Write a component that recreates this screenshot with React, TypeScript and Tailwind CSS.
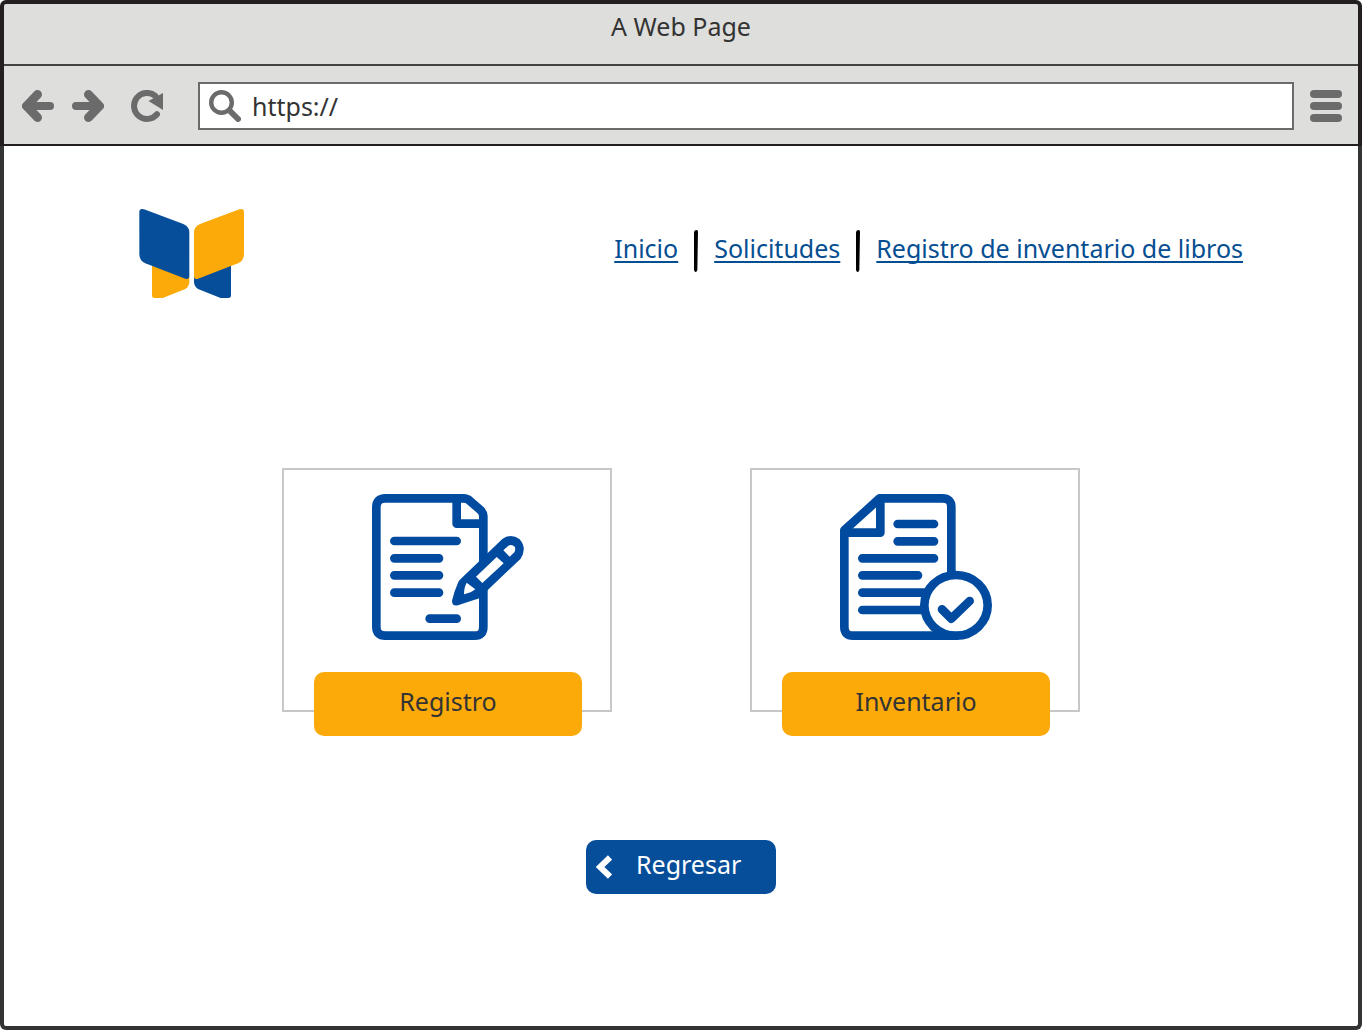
import React from "react";

function BackIcon() {
  return (
    <svg viewBox="0 0 32 32" className="size-8" fill="none" stroke="#6b6b6b" strokeLinecap="round" strokeLinejoin="round" aria-hidden="true">
      <path d="M15.500 4.500 4.500 16 15.500 27.500" strokeWidth="9" />
      <path d="M6 16h22" strokeWidth="8" />
    </svg>
  );
}

function ForwardIcon() {
  return (
    <svg viewBox="0 0 32 32" className="size-8" fill="none" stroke="#6b6b6b" strokeLinecap="round" strokeLinejoin="round" aria-hidden="true">
      <path d="M16.500 4.500 27.500 16 16.500 27.500" strokeWidth="9" />
      <path d="M26 16H4" strokeWidth="8" />
    </svg>
  );
}

function ReloadIcon() {
  return (
    <svg viewBox="0 0 32 32" className="size-8" aria-hidden="true">
      <path d="M26 24.300A13 13 0 1 1 24.200 5.800" fill="none" stroke="#6b6b6b" strokeWidth="6" strokeLinecap="round" />
      <path d="M32 3V20L17.500 11Z" fill="#6b6b6b" />
    </svg>
  );
}

function SearchIcon() {
  return (
    <svg viewBox="0 0 32 32" className="size-8 shrink-0" fill="none" stroke="#6b6b6b" strokeLinecap="round" aria-hidden="true">
      <circle cx="12.500" cy="12.500" r="10.300" strokeWidth="4.400" />
      <path d="M20.500 20.500 29 29" strokeWidth="6" />
    </svg>
  );
}

function MenuIcon() {
  return (
    <svg viewBox="0 0 32 32" className="size-8" fill="#6b6b6b" aria-hidden="true">
      <rect width="32" height="8" rx="4" />
      <rect y="12" width="32" height="8" rx="4" />
      <rect y="24" width="32" height="8" rx="4" />
    </svg>
  );
}

function Logo() {
  return (
    <svg viewBox="27 27 315 267" className="h-[89px] w-[105px]" role="img" aria-label="Logo">
      <path d="M66 190 178 230V245Q178 258 166 267L98 294H74Q66 294 66 286Z" fill="#fcaa0a" />
      <path d="M303 190 192 230V245Q192 258 204 267L272 294H295Q303 294 303 286Z" fill="#064e9a" />
      <path d="M28 36Q28 24 42 28L160 72Q178 80 178 97V229Q178 239 166 236L46 190Q28 182 28 162Z" fill="#064e9a" />
      <path d="M342 36Q342 24 328 28L210 72Q192 80 192 97V229Q192 239 204 236L324 190Q342 182 342 162Z" fill="#fcaa0a" />
    </svg>
  );
}

function Divider() {
  return (
    <svg viewBox="0 0 12 126" className="h-[42px] w-1" aria-hidden="true">
      <path d="M0 7Q1 0 8 0 12 0 12 5L10 120Q9 126 4 126 0 124 0 118Z" />
    </svg>
  );
}

function RegisterIcon() {
  return (
    <svg viewBox="36 42 456 438" className="h-[146px] w-[152px]" fill="none" stroke="#004ba0" strokeWidth="26" strokeLinecap="round" strokeLinejoin="round" aria-hidden="true">
      <path d="M370 242V108Q370 99 362 91L329 62Q322 55 310 55H76Q49 55 49 82V440Q49 467 76 467H344Q370 467 370 440V322" />
      <path d="M290 60V131H366" />
      <path d="M103 183H290M103 235H237M103 286H237M103 338H237M209 416H290" />
      <g stroke="none">
        <path d="M427 177Q453 159 479 178 502 205 482 236L362 350Q356 357 344 359L294 376Q276 380 276 362 281 338 294 308 296 302 302 297Z" fill="#004ba0" />
        <path d="M348 290 410 231 431 250 367 309ZM430 211 445 197Q456 192 465 201 467 212 463 217L449 230ZM320 308 346 328Q334 338 312 343 312 322 320 308Z" fill="#fff" />
      </g>
    </svg>
  );
}

function InventoryIcon() {
  return (
    <svg viewBox="45 42 456 438" className="h-[146px] w-[152px]" fill="none" stroke="#004ba0" strokeWidth="26" strokeLinecap="round" strokeLinejoin="round" aria-hidden="true">
      <path d="M379 285V81Q379 55 352 55H164L58 151V440Q58 467 84 467H394" />
      <path d="M166 58V158H60" />
      <path d="M218 132H327M218 184H327M112 235H327M112 286H279M112 338H300M112 390H295" />
      <ellipse cx="393" cy="376" rx="95" ry="91" fill="#fff" />
      <path d="M351 388 379 416 434 363" />
    </svg>
  );
}

const links = ["Inicio", "Solicitudes", "Registro de inventario de libros"];

const cards = [
  { label: "Registro", Icon: RegisterIcon },
  { label: "Inventario", Icon: InventoryIcon },
];

export default function App() {
  return (
    <div className="flex min-h-screen flex-col bg-white font-['Noto_Sans',sans-serif] text-[25px] leading-8 text-[#333]">
      <header className="rounded-t-md border-x-4 border-t-4 border-b-2 border-[#231f20] bg-[#dededc]">
        <h1 className="flex h-[62px] items-center justify-center border-b-2 border-[#444242] pb-4">A Web Page</h1>
        <div className="flex items-center pt-4 pr-4 pb-3.5 pl-[18px]">
          <button type="button" aria-label="Atrás">
            <BackIcon />
          </button>
          <button type="button" aria-label="Adelante" className="ml-[18px]">
            <ForwardIcon />
          </button>
          <button type="button" aria-label="Recargar" className="ml-[27px]">
            <ReloadIcon />
          </button>
          <label className="mr-4 ml-[35px] flex h-12 flex-1 items-center gap-[11px] border-2 border-[#6b6b6b] bg-white px-[9px]">
            <SearchIcon />
            <input type="text" aria-label="Dirección" defaultValue="https://" className="min-w-0 flex-1 bg-transparent outline-none" />
          </label>
          <button type="button" aria-label="Menú">
            <MenuIcon />
          </button>
        </div>
      </header>

      <div className="flex flex-1 flex-col rounded-b-md border-x-4 border-b-4 border-[#333]">
        <div className="flex items-center justify-between pt-[63px] pr-[115px] pl-[135px]">
          <Logo />
          <nav className="mb-1.5 flex items-center gap-4">
            {links.map((link, i) => (
              <React.Fragment key={link}>
                {i > 0 && <Divider />}
                <a href="#" className="mb-1.5 text-[#064e92] underline decoration-2 underline-offset-3 [text-decoration-skip-ink:none]">
                  {link}
                </a>
              </React.Fragment>
            ))}
          </nav>
        </div>

        <main className="flex flex-col items-center pt-[170px]">
          <div className="flex gap-[138px]">
            {cards.map(({ label, Icon }) => (
              <section key={label} className="flex w-[330px] flex-col items-center border-2 border-[#c8c8c8] pt-6 pl-0.5">
                <Icon />
                <button type="button" className="mt-8 -mb-[26px] h-16 w-[268px] rounded-[10px] bg-[#fcaa0a] pb-1.5">
                  {label}
                </button>
              </section>
            ))}
          </div>
          <button type="button" className="mt-32 flex h-[54px] w-[190px] items-center rounded-[10px] bg-[#064e9a] pl-2.5 text-white">
            <svg viewBox="0 0 16 24" className="h-6 w-4" fill="none" stroke="currentColor" strokeWidth="6" aria-hidden="true">
              <path d="M14 2.500 4 12 14 21.500" />
            </svg>
            <span className="ml-6 pb-1.5">Regresar</span>
          </button>
        </main>
      </div>
    </div>
  );
}
